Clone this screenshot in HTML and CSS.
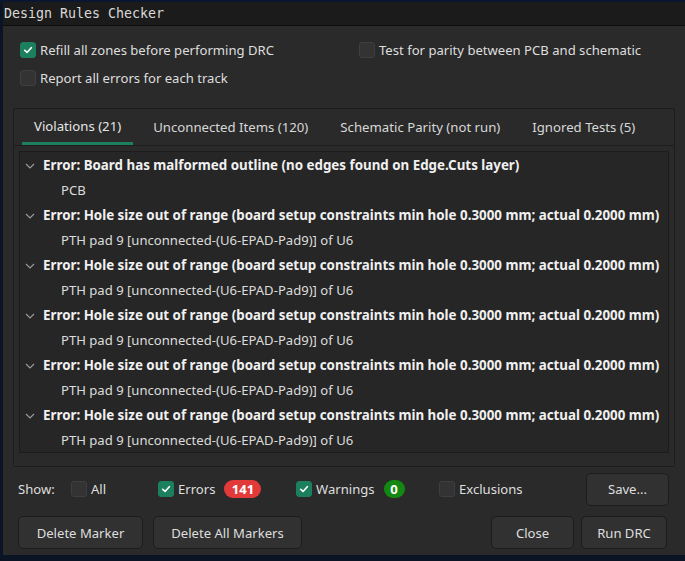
FILE: index.html
```html
<!DOCTYPE html>
<html>
<head>
<meta charset="utf-8">
<link rel="stylesheet" href="styles.css">
</head>
<body>
<div class="desk-top"></div>
<div class="window">
  <div class="titlebar">Design Rules Checker</div>
  <div class="content">
    <div class="opts">
      <div class="opt-col">
        <label class="cb-row"><span class="cb on"><svg viewBox="0 0 16 16"><path d="M4.2 8.3 L6.9 10.8 L11.8 5.4" /></svg></span>Refill all zones before performing DRC</label>
        <label class="cb-row"><span class="cb"></span>Report all errors for each track</label>
      </div>
      <div class="opt-col right">
        <label class="cb-row"><span class="cb"></span>Test for parity between PCB and schematic</label>
      </div>
    </div>

    <div class="tabframe">
      <div class="tabs">
        <div class="tab active">Violations (21)</div>
        <div class="tab">Unconnected Items (120)</div>
        <div class="tab">Schematic Parity (not run)</div>
        <div class="tab">Ignored Tests (5)</div>
      </div>
      <div class="tree">
        <div class="row err"><span class="chev"><svg viewBox="0 0 10 6"><path d="M1 1 L5 5 L9 1"/></svg></span>Error: Board has malformed outline (no edges found on Edge.Cuts layer)</div>
        <div class="row child">PCB</div>
        <div class="row err"><span class="chev"><svg viewBox="0 0 10 6"><path d="M1 1 L5 5 L9 1"/></svg></span>Error: Hole size out of range (board setup constraints min hole 0.3000 mm; actual 0.2000 mm)</div>
        <div class="row child">PTH pad 9 [unconnected-(U6-EPAD-Pad9)] of U6</div>
        <div class="row err"><span class="chev"><svg viewBox="0 0 10 6"><path d="M1 1 L5 5 L9 1"/></svg></span>Error: Hole size out of range (board setup constraints min hole 0.3000 mm; actual 0.2000 mm)</div>
        <div class="row child">PTH pad 9 [unconnected-(U6-EPAD-Pad9)] of U6</div>
        <div class="row err"><span class="chev"><svg viewBox="0 0 10 6"><path d="M1 1 L5 5 L9 1"/></svg></span>Error: Hole size out of range (board setup constraints min hole 0.3000 mm; actual 0.2000 mm)</div>
        <div class="row child">PTH pad 9 [unconnected-(U6-EPAD-Pad9)] of U6</div>
        <div class="row err"><span class="chev"><svg viewBox="0 0 10 6"><path d="M1 1 L5 5 L9 1"/></svg></span>Error: Hole size out of range (board setup constraints min hole 0.3000 mm; actual 0.2000 mm)</div>
        <div class="row child">PTH pad 9 [unconnected-(U6-EPAD-Pad9)] of U6</div>
        <div class="row err"><span class="chev"><svg viewBox="0 0 10 6"><path d="M1 1 L5 5 L9 1"/></svg></span>Error: Hole size out of range (board setup constraints min hole 0.3000 mm; actual 0.2000 mm)</div>
        <div class="row child">PTH pad 9 [unconnected-(U6-EPAD-Pad9)] of U6</div>
      </div>
    </div>

    <div class="showbar">
      <span class="show-lbl">Show:</span>
      <label class="cb-row f-all"><span class="cb"></span>All</label>
      <label class="cb-row f-err"><span class="cb on"><svg viewBox="0 0 16 16"><path d="M4.2 8.3 L6.9 10.8 L11.8 5.4" /></svg></span>Errors<span class="badge red">141</span></label>
      <label class="cb-row f-warn"><span class="cb on"><svg viewBox="0 0 16 16"><path d="M4.2 8.3 L6.9 10.8 L11.8 5.4" /></svg></span>Warnings<span class="badge green">0</span></label>
      <label class="cb-row f-excl"><span class="cb"></span>Exclusions</label>
      <button class="btn save">Save...</button>
    </div>

    <div class="btnbar">
      <button class="btn b-dm">Delete Marker</button>
      <button class="btn b-dam">Delete All Markers</button>
      <span class="spacer"></span>
      <button class="btn b-close">Close</button>
      <button class="btn b-run">Run DRC</button>
    </div>
  </div>
</div>
<div class="desk-bottom"></div>
</body>
</html>
```

FILE: styles.css
```css
* { box-sizing: border-box; }
html, body {
  margin: 0;
  padding: 0;
  width: 685px;
  height: 561px;
  overflow: hidden;
  background: #0a1424;
}
body {
  font-family: "Noto Sans", sans-serif;
  font-size: 13.1px;
  color: #dedede;
}
.desk-top { height: 2px; background: #0b1630; }
.window {
  margin-left: 3px;
  height: 553px;
  background: #2a2a2a;
  display: flex;
  flex-direction: column;
}
.titlebar {
  height: 24px;
  background: #1c1b1b;
  border-bottom: 1px solid #0e0e0e;
  font-family: "DejaVu Sans Mono", monospace;
  font-size: 13.3px;
  color: #d8d8d8;
  padding-left: 1px;
  line-height: 23px;
}
.content {
  flex: 1;
  display: flex;
  flex-direction: column;
}
.opts {
  display: flex;
  padding-top: 16px;
  height: 82px;
}
.opt-col { display: flex; flex-direction: column; gap: 12px; padding-left: 17px; }
.opts .opt-col:first-child { width: 356px; }
.opt-col.right { padding-left: 0; }
.cb-row {
  display: flex;
  align-items: center;
  height: 16px;
  white-space: nowrap;
}
.cb {
  width: 16px;
  height: 16px;
  border-radius: 3px;
  background: #333333;
  border: 1px solid #3f3f3f;
  margin-right: 4px;
  flex: none;
  display: inline-flex;
}
.cb.on { background: #1c7f5e; border-color: #1c7f5e; }
.cb svg { width: 14px; height: 14px; }
.cb svg path { fill: none; stroke: #ffffff; stroke-width: 1.9; stroke-linecap: round; stroke-linejoin: round; }

.tabframe {
  margin-left: 10px;
  width: 662px;
  height: 359px;
  border: 1px solid #1d1d1d;
  border-radius: 2px;
  display: flex;
  flex-direction: column;
  padding: 0 5px;
}
.tabs {
  display: flex;
  gap: 8px;
  height: 37px;
  border-bottom: 1px solid #1d1d1d;
  margin: 0 -5px;
  padding-left: 8px;
}
.tab {
  padding: 0 12px;
  line-height: 36px;
  font-size: 13.2px;
  color: #d8d8d8;
  white-space: nowrap;
}
.tab.active { border-bottom: 3px solid #1c7f5e; line-height: 34px; color: #e6e6e6; }
.tree {
  margin-top: 5px;
  height: 302px;
  background: #262626;
  border: 1px solid #1c1c1c;
  padding-top: 1px;
  overflow: hidden;
}
.row {
  height: 25px;
  line-height: 25px;
  white-space: nowrap;
  display: flex;
  align-items: center;
}
.row.err { font-weight: bold; font-size: 13.35px; color: #f0f0f0; padding-left: 5px; }
.row.child { padding-left: 41px; color: #dcdcdc; }
.chev { width: 18px; flex: none; display: inline-flex; align-items: center; }
.chev svg { width: 10px; height: 6px; }
.chev svg path { fill: none; stroke: #9a9a9a; stroke-width: 1.2; }

.showbar {
  display: flex;
  align-items: center;
  height: 34px;
  margin-top: 5px;
  padding-left: 15px;
}
.show-lbl { width: 53px; }
.f-all { width: 87px; }
.f-err { width: 138px; }
.f-warn { width: 143px; }
.f-excl { width: 147px; }
.badge {
  display: inline-block;
  height: 18px;
  line-height: 18px;
  border-radius: 9px;
  font-weight: bold;
  color: #ffffff;
  text-align: center;
  margin-left: 9px;
}
.badge.red { background: #e23a3a; width: 37px; }
.badge.green { background: #138813; width: 21px; }

.btn {
  font-family: "Noto Sans", sans-serif;
  font-size: 13.1px;
  color: #dedede;
  background: #313131;
  border: 1px solid #1c1c1c;
  border-radius: 5px;
  height: 33px;
  padding: 0;
}
.save { width: 83px; }
.btnbar {
  display: flex;
  align-items: center;
  margin-top: 10px;
  padding-left: 15px;
  gap: 10px;
}
.b-dm { width: 125px; }
.b-dam { width: 149px; }
.spacer { flex: 1; }
.b-close { width: 83px; margin-right: -3px; }
.b-run { width: 86px; margin-right: 18px; }
.desk-bottom { height: 6px; background: #0a1424; }
```
